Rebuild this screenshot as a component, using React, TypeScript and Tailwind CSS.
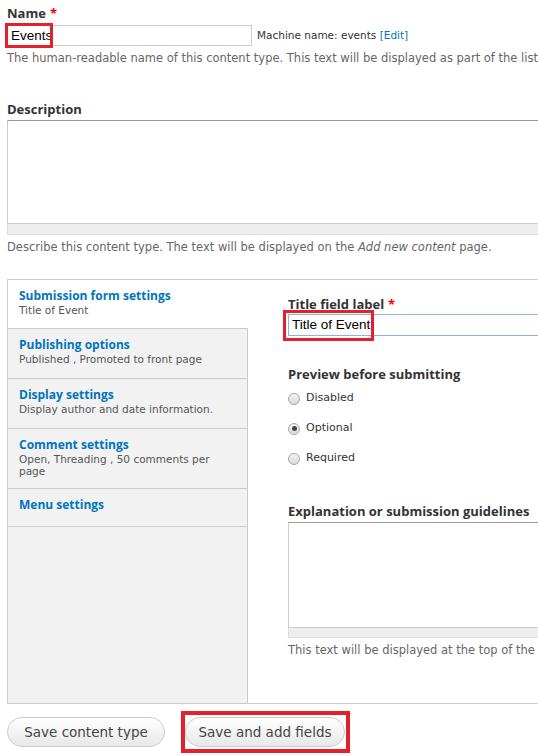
import React from "react";

/**
 * Content type edit form (Drupal Seven admin look).
 */
const tabs = [
  { title: "Submission form settings", summary: "Title of Event", active: true, h: "h-[49px]" },
  { title: "Publishing options", summary: "Published , Promoted to front page", h: "h-[50px]" },
  { title: "Display settings", summary: "Display author and date information.", h: "h-[50px]" },
  { title: "Comment settings", summary: "Open, Threading , 50 comments per page", h: "h-[60px]" },
  { title: "Menu settings", summary: "", h: "h-[38px]" }
];

const radios = [
  { label: "Disabled", checked: false },
  { label: "Optional", checked: true },
  { label: "Required", checked: false }
];

const Radio = ({ checked }: { checked: boolean }) => (
  <span className="flex h-[12px] w-[12px] items-center justify-center rounded-full border border-[#a9a9a9] bg-gradient-to-b from-[#f4f4f4] to-[#d9d9d9]">
    {checked ? <span className="h-[5px] w-[5px] rounded-full bg-[#444]" /> : null}
  </span>
);

const Label = ({ text, required }: { text: string; required?: boolean }) => (
  <div className="font-['Open_Sans',sans-serif] text-[13px] font-bold leading-[16px] text-[#333]">
    {text}
    {required ? <span className="ml-[4px] text-[#e00]">*</span> : null}
  </div>
);

export default function App() {
  return (
    <div className="h-[756px] w-[538px] overflow-hidden bg-white font-['DejaVu_Sans',sans-serif] text-[#333]">
      <div className="w-[700px] pl-[7px] pt-[5px]">
        {/* Name */}
        <Label text="Name" required />
        <div className="mt-[4px] flex items-center">
          <div className="relative">
            <div className="h-[21px] w-[245px] border border-[#ccc] bg-white pl-[3px] font-['Liberation_Sans',sans-serif] text-[13.5px] leading-[19px] text-black">
              Events
            </div>
            <div className="absolute left-[-2px] top-[-2px] h-[25px] w-[48px] border-[3px] border-[#e4202b]" />
          </div>
          <span className="ml-[5px] text-[10.5px] text-[#333]">
            Machine name: events <span className="text-[#0074bd]">[Edit]</span>
          </span>
        </div>
        <p className="mt-[5px] whitespace-nowrap text-[11.5px] leading-[14px] text-[#666]">
          The human-readable name of this content type. This text will be displayed as part of the list on the
        </p>

        {/* Description */}
        <div className="mt-[36px]">
          <Label text="Description" />
        </div>
        <div className="mt-[3px] w-[600px]">
          <div className="h-[104px] border border-[#ccc] border-t-[#999] bg-white" />
          <div className="h-[11px] border border-t-0 border-[#ddd] bg-[#eee]" />
        </div>
        <p className="mt-[5px] whitespace-nowrap text-[11.5px] leading-[14px] text-[#666]">
          Describe this content type. The text will be displayed on the <em>Add new content</em> page.
        </p>

        {/* Vertical tabs */}
        <div className="mt-[25px] flex h-[425px] w-[640px] border border-[#ccc]">
          <ul className="w-[240px] shrink-0 border-r border-[#ccc] bg-[#f2f2f2]">
            {tabs.map((t) => (
              <li
                key={t.title}
                className={`${t.h} border-b border-[#ccc] pl-[11px] pt-[8px] ${
                  t.active ? "relative z-10 mr-[-1px] bg-white" : ""
                }`}
              >
                <div className="font-['Open_Sans',sans-serif] text-[12px] font-bold leading-[16px] text-[#0074bd]">
                  {t.title}
                </div>
                {t.summary ? (
                  <div className="w-[200px] text-[10.5px] leading-[12px] text-[#555]">{t.summary}</div>
                ) : null}
              </li>
            ))}
          </ul>
          <div className="flex-1 pl-[40px] pt-[16px]">
            <Label text="Title field label" required />
            <div className="relative mt-[2px]">
              <div className="h-[22px] w-[400px] border border-[#8db3e2] bg-white pl-[3px] font-['Liberation_Sans',sans-serif] text-[13.5px] leading-[20px] text-black">
                Title of Event
              </div>
              <div className="absolute left-[-5px] top-[-4px] h-[31px] w-[91px] border-[3px] border-[#e4202b]" />
            </div>

            <div className="mt-[30px]">
              <Label text="Preview before submitting" />
            </div>
            <div className="mt-[8px] flex flex-col gap-[13px]">
              {radios.map((r) => (
                <div key={r.label} className="flex h-[17px] items-center gap-[6px] text-[11px] text-[#333]">
                  <Radio checked={r.checked} />
                  {r.label}
                </div>
              ))}
            </div>

            <div className="mt-[36px] whitespace-nowrap">
              <Label text="Explanation or submission guidelines" />
            </div>
            <div className="mt-[3px] w-[400px]">
              <div className="h-[106px] border border-[#ccc] border-t-[#999] bg-white" />
              <div className="h-[10px] border border-t-0 border-[#ddd] bg-[#eee]" />
            </div>
            <p className="mt-[5px] whitespace-nowrap text-[11.5px] leading-[14px] text-[#666]">
              This text will be displayed at the top of the page when creating or editing content of this type.
            </p>
          </div>
        </div>

        {/* Actions */}
        <div className="mt-[13px] flex items-center gap-[20px]">
          <button className="h-[30px] w-[158px] rounded-[15px] border border-[#ccc] bg-gradient-to-b from-white to-[#e8e8e8] text-[13.5px] text-[#444]">
            Save content type
          </button>
          <div className="relative">
            <button className="h-[30px] w-[160px] rounded-[15px] border border-[#ccc] bg-gradient-to-b from-white to-[#e8e8e8] text-[13.5px] text-[#444]">
              Save and add fields
            </button>
            <div className="absolute left-[-4px] top-[-6px] h-[42px] w-[169px] border-[4px] border-[#e4202b]" />
          </div>
        </div>
      </div>
    </div>
  );
}
